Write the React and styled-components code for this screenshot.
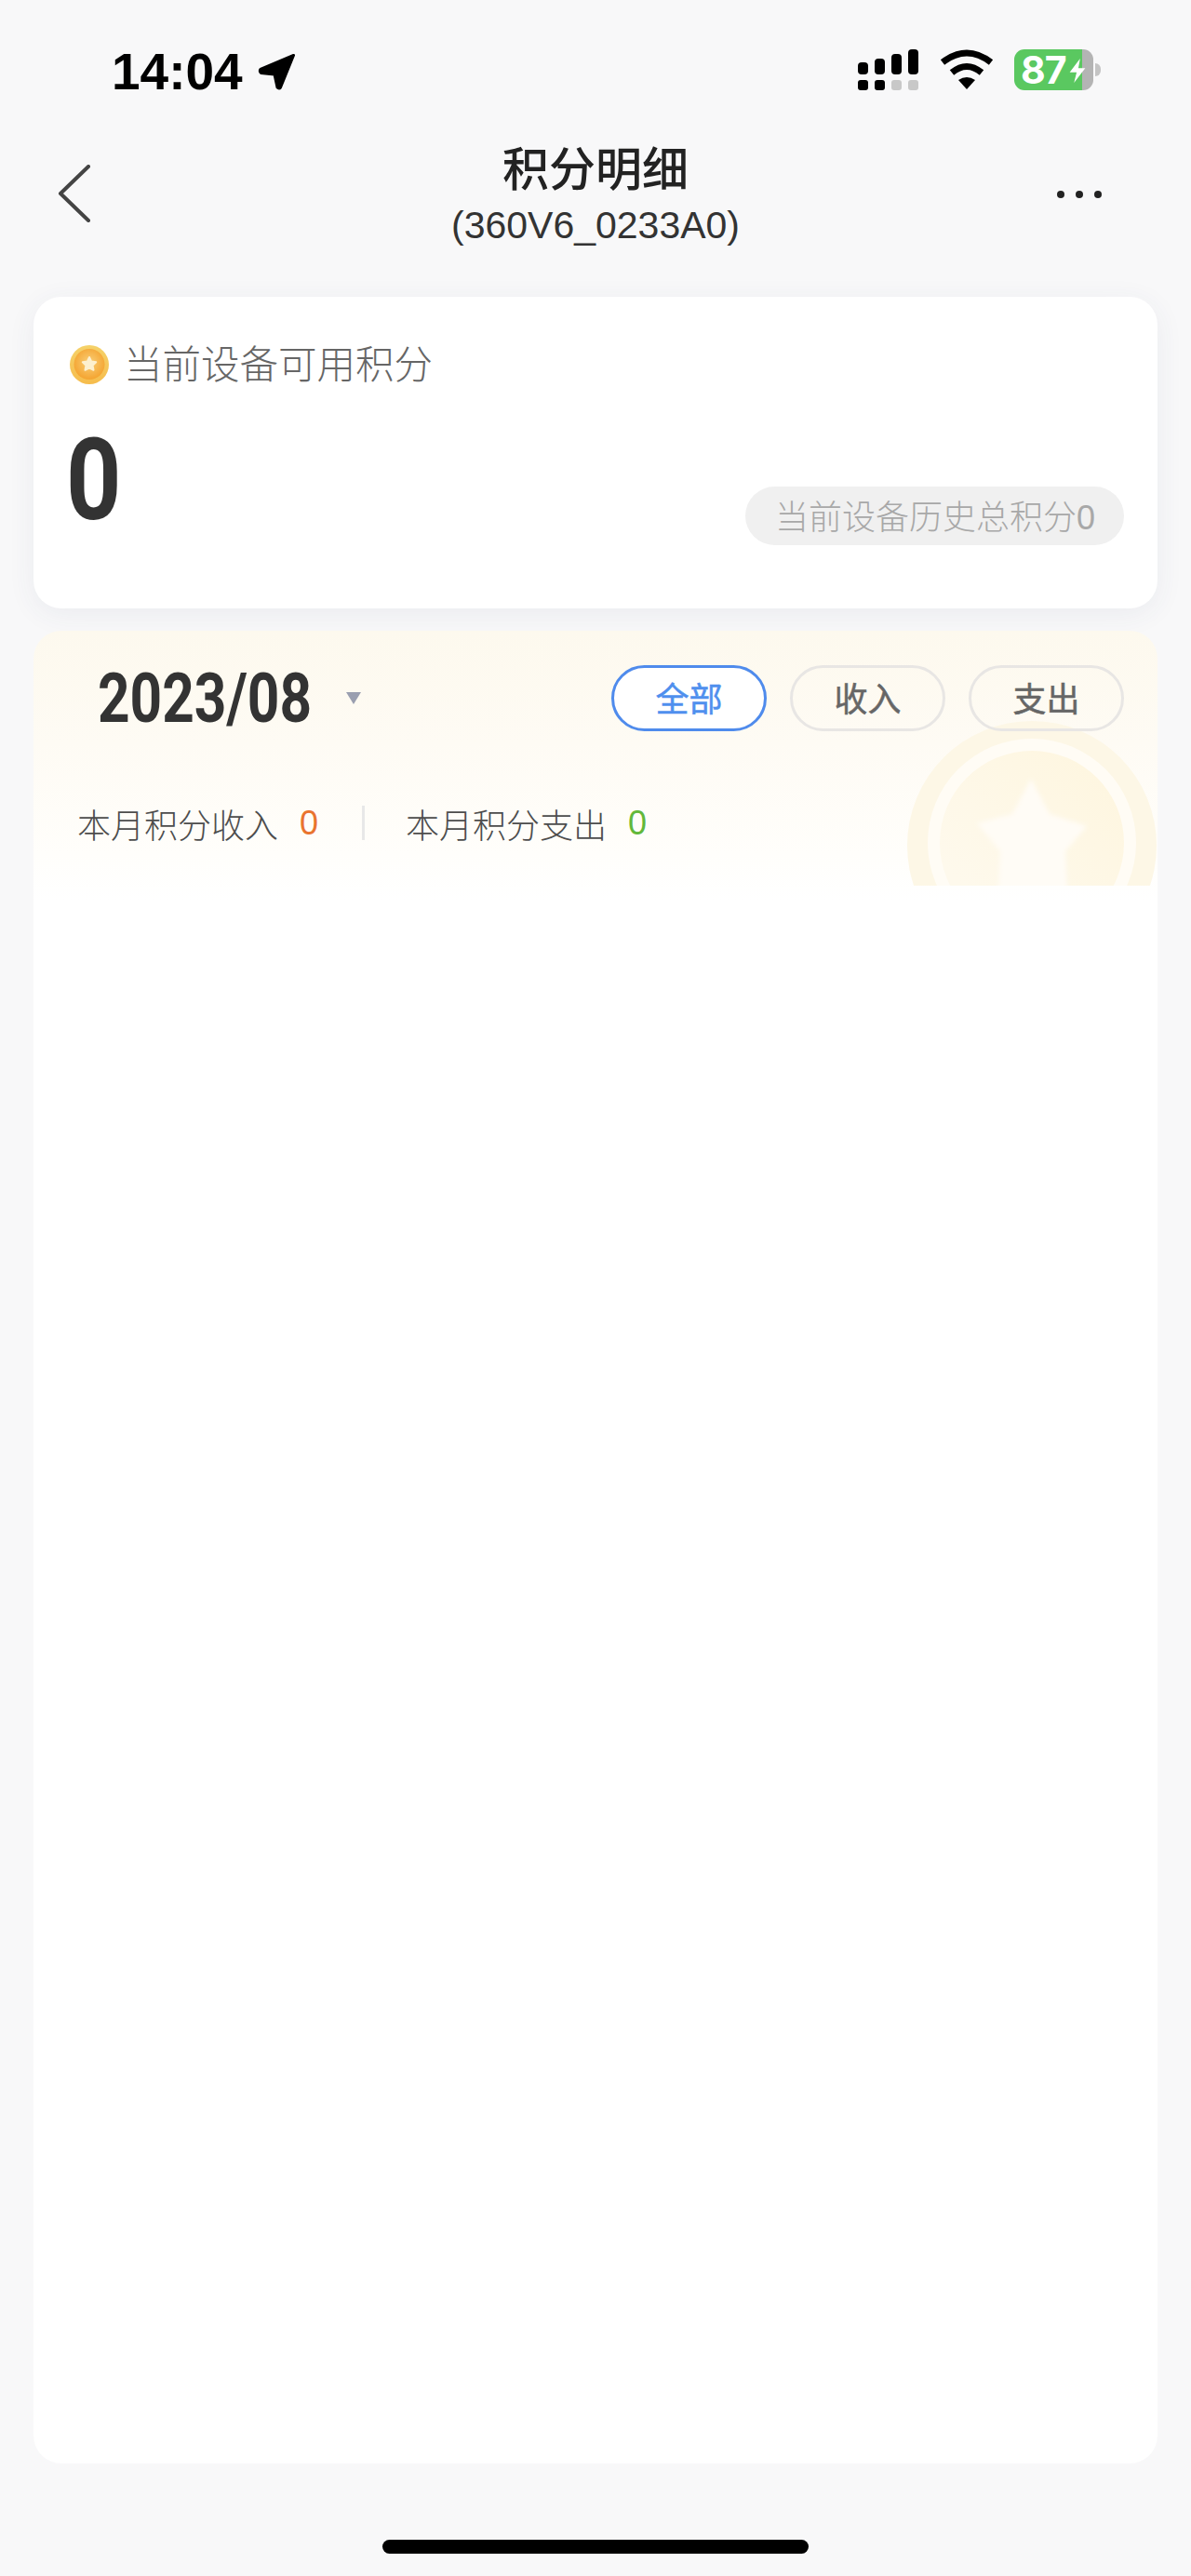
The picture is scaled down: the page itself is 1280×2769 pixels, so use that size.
import styled, { createGlobalStyle } from 'styled-components';

const GlobalStyle = createGlobalStyle`
  html, body { margin: 0; padding: 0; background: #f8f8f9; }
  * { box-sizing: border-box; }
`;

const cjk = '"Liberation Sans", "Noto Sans CJK SC", sans-serif';

const Page = styled.div`
  width: 1280px;
  height: 2769px;
  display: flex;
  flex-direction: column;
  background: #f8f8f9;
  font-family: ${cjk};
  overflow: hidden;
`;

const StatusBar = styled.div`
  height: 145px;
  padding: 53px 105px 0 120px;
  display: flex;
  justify-content: space-between;
  align-items: flex-start;
`;

const Clock = styled.div`
  display: flex;
  align-items: center;
  gap: 16px;
  height: 44px;
  margin-top: 2px;
  font-size: 55px;
  font-weight: 700;
  color: #000;
`;

const StatusIcons = styled.div`
  display: flex;
  align-items: center;
  gap: 22px;
`;

const Battery = styled.div`
  position: relative;
  width: 85px;
  height: 44px;
  border-radius: 11px;
  background: linear-gradient(90deg, #5ac860 0 86%, #b4b4b4 86% 100%);
  color: #fff;
  font-family: Inter, sans-serif;
  font-size: 41px;
  font-weight: 700;
  line-height: 44px;
  padding-left: 7px;
  letter-spacing: -1px;
`;

const Bolt = styled.svg`
  position: absolute;
  right: 7px;
  top: 10px;
`;

const BatteryNub = styled.span`
  position: absolute;
  right: -8px;
  top: 15px;
  width: 6px;
  height: 14px;
  border-radius: 0 7px 7px 0;
  background: #c4c4c4;
`;

const NavBar = styled.div`
  height: 125px;
  padding: 0 62px;
  display: grid;
  grid-template-columns: 1fr auto 1fr;
  align-items: center;
`;

const BackIcon = styled.svg`
  display: block;
`;

const TitleBlock = styled.div`
  text-align: center;
  color: #222;
`;

const Title = styled.div`
  font-size: 50px;
  line-height: 62px;
  font-weight: 500;
  margin-top: 2px;
  color: #222;
`;

const SubTitle = styled.div`
  font-size: 41px;
  line-height: 46px;
  margin-top: 5px;
  color: #333;
`;

const MoreButton = styled.div`
  justify-self: end;
  display: flex;
  gap: 12px;
  margin: 2px 34px 0 0;
`;

const Dot = styled.span`
  width: 8px;
  height: 8px;
  border-radius: 50%;
  background: #222;
`;

const Main = styled.div`
  flex: 1;
  padding: 49px 36px 0;
  display: flex;
  flex-direction: column;
  gap: 24px;
`;

const SummaryCard = styled.section`
  height: 335px;
  padding: 52px 36px 0 39px;
  background: #fff;
  border-radius: 30px;
  box-shadow: 0 6px 30px rgba(60, 70, 110, 0.07);
`;

const SummaryLabel = styled.div`
  display: flex;
  align-items: center;
  gap: 16px;
  height: 42px;
  font-size: 41.5px;
  font-weight: 300;
  color: #666;
`;

const SummaryLabelText = styled.span`
  margin-bottom: 6px;
`;

const SummaryRow = styled.div`
  margin-top: 59px;
  display: flex;
  justify-content: space-between;
  align-items: flex-end;
`;

const BigValue = styled.div`
  width: 51px;
  margin: 0 0 25px -4px;
  font-family: Roboto, sans-serif;
  font-size: 122px;
  line-height: 89px;
  font-weight: 700;
  color: #333;
  transform: scaleX(0.85);
  transform-origin: left center;
`;

const HistoryPill = styled.div`
  height: 63px;
  padding: 0 31px 3px 32px;
  display: flex;
  align-items: center;
  border-radius: 32px;
  background: #f0f0f0;
  color: #a8a8a8;
  font-size: 36px;
  font-weight: 300;
`;

const DetailCard = styled.section`
  position: relative;
  height: 1970px;
  padding: 37px 36px 0 69px;
  background: linear-gradient(180deg, #fdf9ee 0, #fefbf4 120px, #fffefb 240px, #fff 290px);
  border-radius: 30px;
  overflow: hidden;
`;

const Watermark = styled.svg`
  position: absolute;
  right: 0;
  top: 97px;
`;

const FilterRow = styled.div`
  position: relative;
  display: flex;
  align-items: center;
  justify-content: space-between;
`;

const MonthPicker = styled.div`
  display: flex;
  align-items: center;
  gap: 39px;
`;

const Month = styled.div`
  width: 228px;
  white-space: nowrap;
  font-family: Roboto, sans-serif;
  font-size: 74px;
  line-height: 71px;
  font-weight: 700;
  color: #333;
  transform: scaleX(0.815);
  transform-origin: left center;
`;

const Caret = styled.span`
  width: 0;
  height: 0;
  border-left: 8px solid transparent;
  border-right: 8px solid transparent;
  border-top: 13px solid #9a9fb0;
`;

const Tabs = styled.div`
  display: flex;
  gap: 25px;
`;

const Tab = styled.div`
  width: 167px;
  height: 71px;
  padding-bottom: 3px;
  display: flex;
  align-items: center;
  justify-content: center;
  border-radius: 36px;
  border: 3px solid ${p => (p.$active ? '#4f8bec' : '#e8e6e4')};
  background: ${p => (p.$active ? '#fff' : 'transparent')};
  color: ${p => (p.$active ? '#4f8fee' : '#666')};
  font-size: 36px;
  font-weight: 400;
  -webkit-text-stroke: 0.5px currentColor;
`;

const StatsRow = styled.div`
  position: relative;
  margin: 80px 0 0 -22px;
  height: 37px;
  display: flex;
  align-items: center;
  font-size: 36px;
  font-weight: 300;
  color: #4d4d4d;
`;

const StatValue = styled.span`
  margin-left: 23px;
  color: ${p => p.$color};
  font-weight: 400;
`;

const StatDivider = styled.span`
  width: 3px;
  height: 37px;
  margin: 0 44px 0 47px;
  background: #e8e8e8;
`;

const HomeRow = styled.div`
  height: 121px;
  padding-top: 82px;
  display: flex;
  justify-content: center;
`;

const HomeBar = styled.div`
  width: 458px;
  height: 15px;
  border-radius: 8px;
  background: #000;
`;

function LocationArrow() {
  return (
    <svg width="41" height="40" viewBox="0 0 41 40">
      <path
        d="M38.5 2.5 L3 17.5 Q1.5 19.5 3.5 21.5 L18 23 L21 37 Q23 39 24.5 37 Z"
        fill="#000"
        stroke="#000"
        strokeWidth="3"
        strokeLinejoin="round"
      />
    </svg>
  );
}

function SignalIcon() {
  const bars = [
    { x: 0, top: 14 },
    { x: 18, top: 10 },
    { x: 36, top: 5 },
    { x: 54, top: 0 },
  ];
  return (
    <svg width="66" height="44" viewBox="0 0 66 44">
      {bars.map(b => (
        <rect key={b.x} x={b.x} y={b.top} width="11" height={27 - b.top} rx="4" fill="#000" />
      ))}
      {bars.map((b, i) => (
        <rect key={b.x} x={b.x} y="33" width="11" height="11" rx="3" fill={i < 2 ? '#000' : '#c8c8c8'} />
      ))}
    </svg>
  );
}

function WifiIcon() {
  return (
    <svg width="58" height="44" viewBox="0 0 58 44">
      <path d="M3 14 Q29 -6 55 14" fill="none" stroke="#000" strokeWidth="7" />
      <path d="M13 25 Q29 12 45 25" fill="none" stroke="#000" strokeWidth="7" />
      <path d="M20 33 Q29 27 38 33 L29 43 Z" fill="#000" />
    </svg>
  );
}

function CoinIcon() {
  return (
    <svg width="42" height="42" viewBox="0 0 42 42">
      <defs>
        <linearGradient id="coinRim" x1="0" y1="0" x2="0" y2="1">
          <stop offset="0" stopColor="#f5d26a" />
          <stop offset="1" stopColor="#f6bc4c" />
        </linearGradient>
        <radialGradient id="coinFace" cx="0.5" cy="0.45" r="0.6">
          <stop offset="0" stopColor="#f9cf78" />
          <stop offset="1" stopColor="#f4a02a" />
        </radialGradient>
      </defs>
      <circle cx="21" cy="21" r="21" fill="url(#coinRim)" />
      <circle cx="21" cy="20.5" r="16.5" fill="url(#coinFace)" />
      <path
        d="M21 13 L23.2 17.6 L28.2 18.3 L24.6 21.8 L25.5 26.8 L21 24.4 L16.5 26.8 L17.4 21.8 L13.8 18.3 L18.8 17.6 Z"
        fill="#fdf0cf"
        stroke="#fdf0cf"
        strokeWidth="2"
        strokeLinejoin="round"
      />
    </svg>
  );
}

function CoinWatermark() {
  return (
    <Watermark width="269" height="177" viewBox="0 0 269 177">
      <defs>
        <linearGradient id="wmFace" x1="0.9" y1="0.1" x2="0.2" y2="0.8">
          <stop offset="0" stopColor="#fef6e0" />
          <stop offset="1" stopColor="#fef9ec" />
        </linearGradient>
        <filter id="wmSoft">
          <feGaussianBlur stdDeviation="2.5" />
        </filter>
      </defs>
      <circle cx="134" cy="134" r="134" fill="#fdf7e6" />
      <circle cx="134" cy="131" r="112" fill="#fffcf5" />
      <circle cx="134" cy="131" r="99" fill="url(#wmFace)" />
      <path
        d="M133 62 L153 100 L193 113 L170 140 L172 185 L98 185 L100 140 L75 110 L113 100 Z"
        fill="#fffcf6"
        filter="url(#wmSoft)"
      />
    </Watermark>
  );
}

export default function App() {
  return (
    <Page>
      <GlobalStyle />
      <StatusBar>
        <Clock>
          14:04
          <LocationArrow />
        </Clock>
        <StatusIcons>
          <SignalIcon />
          <WifiIcon />
          <Battery>
            87
            <Bolt width="20" height="26" viewBox="0 0 20 28">
              <path d="M13 0 L1 16 H9 L6 28 L19 11 H11 Z" fill="#fff" />
            </Bolt>
            <BatteryNub />
          </Battery>
        </StatusIcons>
      </StatusBar>

      <NavBar>
        <BackIcon width="36" height="62" viewBox="0 0 36 62">
          <path d="M33 2 L3 31 L33 60" fill="none" stroke="#444" strokeWidth="4" strokeLinecap="round" strokeLinejoin="round" />
        </BackIcon>
        <TitleBlock>
          <Title>积分明细</Title>
          <SubTitle>(360V6_0233A0)</SubTitle>
        </TitleBlock>
        <MoreButton>
          <Dot />
          <Dot />
          <Dot />
        </MoreButton>
      </NavBar>

      <Main>
        <SummaryCard>
          <SummaryLabel>
            <CoinIcon />
            <SummaryLabelText>当前设备可用积分</SummaryLabelText>
          </SummaryLabel>
          <SummaryRow>
            <BigValue>0</BigValue>
            <HistoryPill>当前设备历史总积分0</HistoryPill>
          </SummaryRow>
        </SummaryCard>

        <DetailCard>
          <CoinWatermark />
          <FilterRow>
            <MonthPicker>
              <Month>2023/08</Month>
              <Caret />
            </MonthPicker>
            <Tabs>
              <Tab $active>全部</Tab>
              <Tab>收入</Tab>
              <Tab>支出</Tab>
            </Tabs>
          </FilterRow>
          <StatsRow>
            本月积分收入
            <StatValue $color="#e9742f">0</StatValue>
            <StatDivider />
            本月积分支出
            <StatValue $color="#62b83a">0</StatValue>
          </StatsRow>
        </DetailCard>
      </Main>

      <HomeRow>
        <HomeBar />
      </HomeRow>
    </Page>
  );
}
